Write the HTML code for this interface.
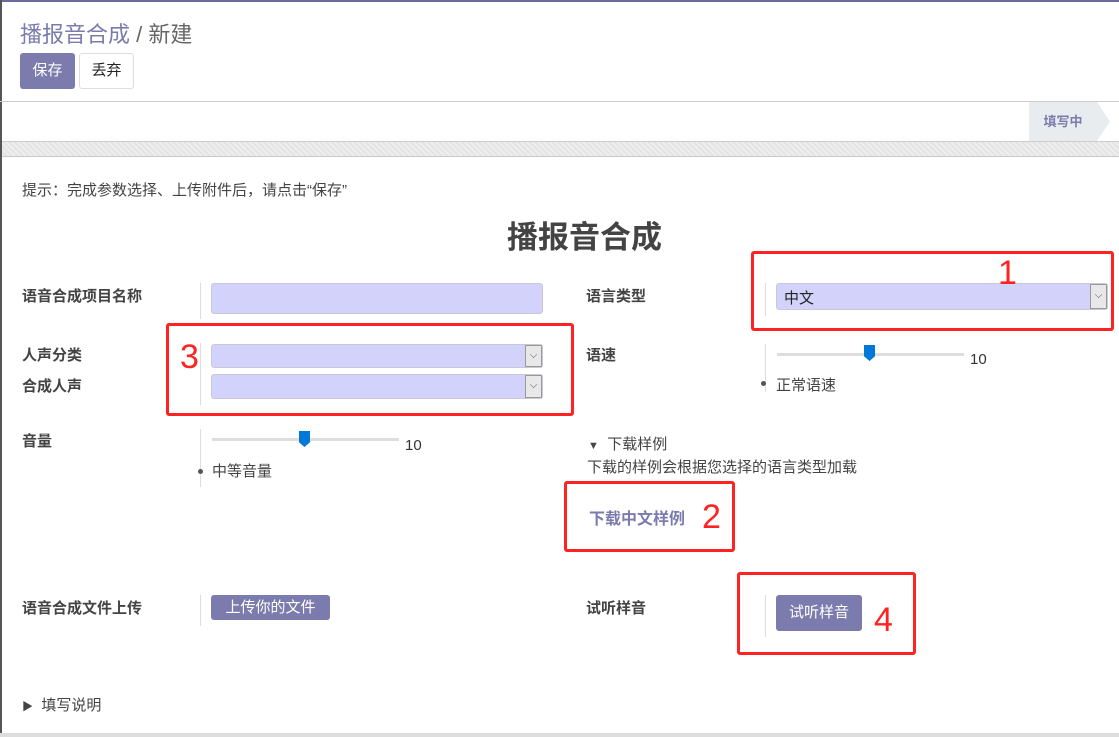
<!DOCTYPE html>
<html><head><meta charset="utf-8"><style>
*{margin:0;padding:0;box-sizing:border-box}
body{width:1119px;height:737px;position:relative;overflow:hidden;background:#fff;font-family:"Liberation Sans","Noto Sans CJK SC",sans-serif;color:#444;font-size:14px}
.a{position:absolute;white-space:nowrap}
.lb{font-weight:bold;font-size:15px;color:#444}
.sep{position:absolute;width:1px;background:#ddd}
.inp{position:absolute;background:#d2d2fb;border:1px solid #c8c8d8;border-radius:3px}
.dd{position:absolute;right:0;top:0;bottom:0;width:17px;background:#e8e8e8;border:1px solid #999;font-size:10px;text-align:center;color:#555}
.red{position:absolute;border:3px solid #f22;border-radius:3px}
.num{position:absolute;color:#f22;font-size:34px;line-height:34px;font-family:"Liberation Sans",sans-serif}
.trk{position:absolute;height:3px;background:#ddd}
.thumb{position:absolute;width:11px;height:16px;background:#0078d7;clip-path:polygon(0 0,100% 0,100% 70%,50% 100%,0 70%)}
.btn{position:absolute;background:#7c7bad;color:#fff;border-radius:3px;text-align:center}
</style></head><body>
<div class="a" style="left:0;top:0;width:1119px;height:2px;background:#6b6a9e"></div>
<div class="a" style="left:0;top:0;width:2px;height:737px;background:#555"></div>
<div class="a" style="left:20px;top:17px;font-size:22px;color:#7c7bad">播报音合成<span style="color:#666"> / 新建</span></div>
<div class="btn" style="left:20px;top:53px;width:55px;height:36px;line-height:36px;font-size:15px">保存</div>
<div class="a" style="left:79px;top:53px;width:55px;height:36px;line-height:34px;border:1px solid #ddd;border-radius:3px;text-align:center;font-size:15px;color:#222">丢弃</div>
<div class="a" style="left:0;top:101px;width:1119px;height:1px;background:#ccc"></div>
<div class="a" style="left:1029px;top:102px;width:68px;height:39px;background:#e9ecef;line-height:39px;text-align:center;font-size:13px;font-weight:bold;color:#7c7bad">填写中</div>
<div class="a" style="left:1097px;top:102px;width:13px;height:39px;background:#e9ecef;clip-path:polygon(0 0,100% 50%,0 100%)"></div>
<div class="a" style="left:2px;top:141px;width:1117px;height:16px;border-top:1px solid #ccc;border-bottom:1px solid #c8c8c8;background:repeating-linear-gradient(45deg,#eee 0 2px,#e4e4e4 2px 4px)"></div>
<div class="a" style="left:22px;top:179px;font-size:15px;color:#444">提示：完成参数选择、上传附件后，请点击“保存”</div>
<div class="a" style="left:507px;top:212px;font-size:31px;font-weight:bold;color:#444">播报音合成</div>

<div class="a lb" style="left:22px;top:285px">语音合成项目名称</div>
<div class="sep" style="left:200px;top:283px;height:36px"></div>
<div class="inp" style="left:211px;top:283px;width:332px;height:31px"></div>

<div class="a lb" style="left:586px;top:285px">语言类型</div>
<div class="sep" style="left:765px;top:283px;height:33px"></div>
<div class="inp" style="left:776px;top:283px;width:332px;height:27px"><span class="a" style="left:7px;top:3px;font-size:15px;color:#222">中文</span><div class="dd" style="line-height:22px">⌵</div></div>

<div class="a lb" style="left:22px;top:344px">人声分类</div>
<div class="a lb" style="left:22px;top:375px">合成人声</div>
<div class="sep" style="left:200px;top:343px;height:62px"></div>
<div class="inp" style="left:211px;top:344px;width:332px;height:24px"><div class="dd" style="line-height:20px">⌵</div></div>
<div class="inp" style="left:211px;top:374px;width:332px;height:25px"><div class="dd" style="line-height:20px">⌵</div></div>

<div class="a lb" style="left:586px;top:344px">语速</div>
<div class="sep" style="left:765px;top:344px;height:48px"></div>
<div class="trk" style="left:777px;top:353px;width:187px"></div>
<div class="thumb" style="left:864px;top:345px"></div>
<div class="a" style="left:970px;top:351px;font-size:15px;color:#333">10</div>
<div class="a" style="left:761px;top:381px;width:5px;height:5px;border-radius:50%;background:#555"></div>
<div class="a" style="left:776px;top:374px;font-size:15px;color:#444">正常语速</div>

<div class="a lb" style="left:22px;top:430px">音量</div>
<div class="sep" style="left:200px;top:429px;height:58px"></div>
<div class="trk" style="left:212px;top:438px;width:187px"></div>
<div class="thumb" style="left:299px;top:431px"></div>
<div class="a" style="left:405px;top:437px;font-size:15px;color:#333">10</div>
<div class="a" style="left:198px;top:469px;width:5px;height:5px;border-radius:50%;background:#555"></div>
<div class="a" style="left:212px;top:460px;font-size:15px;color:#444">中等音量</div>

<div class="a" style="left:588px;top:433px;font-size:15px;color:#444"><span style="font-size:11px">▼</span>&nbsp; 下载样例</div>
<div class="a" style="left:587px;top:456px;font-size:15px;color:#444">下载的样例会根据您选择的语言类型加载</div>
<div class="a" style="left:589px;top:505px;font-size:16px;font-weight:bold;color:#7c7bad">下载中文样例</div>

<div class="a lb" style="left:22px;top:597px">语音合成文件上传</div>
<div class="sep" style="left:200px;top:595px;height:31px"></div>
<div class="btn" style="left:211px;top:595px;width:119px;height:25px;line-height:25px;font-size:15px">上传你的文件</div>

<div class="a lb" style="left:586px;top:597px">试听样音</div>
<div class="sep" style="left:765px;top:595px;height:42px"></div>
<div class="btn" style="left:776px;top:595px;width:86px;height:36px;line-height:36px;font-size:15px">试听样音</div>

<div class="a" style="left:22px;top:694px;font-size:15px;color:#444"><span style="font-size:11px">▶</span>&nbsp; 填写说明</div>
<div class="a" style="left:0;top:733px;width:1119px;height:4px;background:#ddd"></div>

<div class="red" style="left:751px;top:251px;width:363px;height:80px"></div>
<div class="num" style="left:998px;top:256px">1</div>
<div class="red" style="left:166px;top:323px;width:408px;height:93px"></div>
<div class="num" style="left:180px;top:340px">3</div>
<div class="red" style="left:564px;top:481px;width:171px;height:71px"></div>
<div class="num" style="left:702px;top:500px">2</div>
<div class="red" style="left:737px;top:572px;width:179px;height:83px"></div>
<div class="num" style="left:874px;top:603px">4</div>
</body></html>
